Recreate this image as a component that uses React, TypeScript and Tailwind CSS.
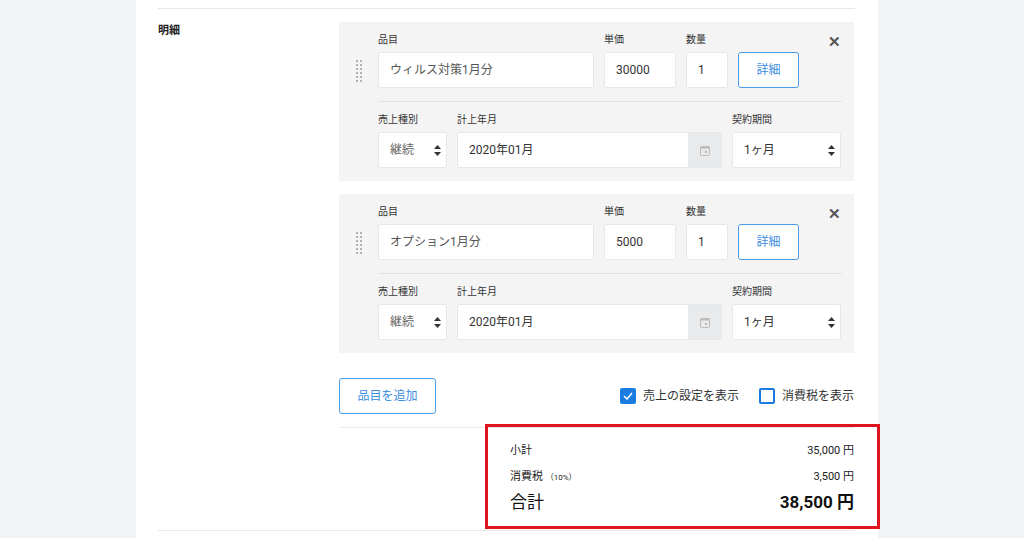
import React from "react";

const font = { fontFamily: '"Roboto","Noto Sans CJK JP",sans-serif' };

function Updown() {
  return (
    <svg width="7" height="11" viewBox="0 0 7 11" className="text-[#333]">
      <path d="M3.5 0L7 4H0z M3.5 11L0 7h7z" fill="currentColor" />
    </svg>
  );
}

function Item({ name, price }: { name: string; price: string }) {
  const input = "h-[36px] bg-white border border-[#e5e7eb] rounded-[2px] flex items-center px-[11px] text-[12px] text-[#333]";
  const label = "text-[10px] leading-[15px] text-[#333] mb-[5px]";
  return (
    <div className="relative bg-[#f4f4f4] pl-[39px] pr-[12px] pt-[10px] pb-[13px]">
      <div className="absolute left-[17px] top-[38px] grid grid-cols-2 gap-x-[2px] gap-y-[2px]">
        {Array.from({ length: 12 }).map((_, i) => (
          <div key={i} className="w-[2px] h-[2px] bg-[#b0b0b0]" />
        ))}
      </div>
      <div className="absolute right-[13px] top-[9px] text-[15px] font-bold text-[#555]">✕</div>
      <div className="flex gap-[10px] items-end">
        <div className="w-[216px]">
          <div className={label}>品目</div>
          <div className={input + " text-[#555]"}>{name}</div>
        </div>
        <div className="w-[72px]">
          <div className={label}>単価</div>
          <div className={input}>{price}</div>
        </div>
        <div className="w-[42px]">
          <div className={label}>数量</div>
          <div className={input}>1</div>
        </div>
        <div className="w-[61px] h-[36px] border border-[#4a9be8] rounded-[3px] bg-white flex items-center justify-center text-[12px] text-[#3b8de0]">詳細</div>
      </div>
      <div className="h-px bg-[#e2e2e2] mt-[13px] mb-[10px]" />
      <div className="flex gap-[10px]">
        <div className="w-[69px]">
          <div className={label}>売上種別</div>
          <div className={input + " justify-between pr-[5px] px-[8px] text-[#666]"}>継続<Updown /></div>
        </div>
        <div className="w-[265px]">
          <div className={label}>計上年月</div>
          <div className="h-[36px] flex border border-[#e5e7eb] rounded-[2px] bg-white">
            <div className="flex-1 flex items-center px-[11px] text-[12px] text-[#333]">2020年01月</div>
            <div className="w-[33px] bg-[#e9eaec] flex items-center justify-center">
              <svg width="10" height="11" viewBox="0 0 10 11"><rect x="0.5" y="1.5" width="9" height="9" rx="1" fill="none" stroke="#bbb" /><rect x="0.5" y="1.5" width="9" height="2" fill="#bbb" /><rect x="5" y="6" width="2" height="2" fill="#bbb" /></svg>
            </div>
          </div>
        </div>
        <div className="w-[109px]">
          <div className={label}>契約期間</div>
          <div className={input + " justify-between pr-[5px] px-[8px]"}>1ヶ月<Updown /></div>
        </div>
      </div>
    </div>
  );
}

export default function App() {
  return (
    <div className="w-[1024px] h-[538px] bg-[#f2f3f5] overflow-hidden" style={font}>
      <div className="ml-[136px] w-[742px] h-[538px] bg-white pl-[22px] pr-[23px] pt-[8px]">
        <div className="h-px bg-[#e8e8e8]" />
        <div className="flex mt-[13px]">
          <div className="w-[181px] pt-[1px] text-[11px] font-bold text-[#222]">明細</div>
          <div className="w-[515px]">
            <div className="flex flex-col gap-[13px]">
              <Item name="ウィルス対策1月分" price="30000" />
              <Item name="オプション1月分" price="5000" />
            </div>
            <div className="flex items-center justify-between mt-[25px]">
              <div className="w-[97px] h-[36px] border border-[#4a9be8] rounded-[3px] flex items-center justify-center text-[12px] text-[#3b8de0]">品目を追加</div>
              <div className="flex items-center text-[12px] text-[#333]">
                <div className="w-[16px] h-[16px] rounded-[2px] bg-[#1a7be0] flex items-center justify-center">
                  <svg width="10" height="8" viewBox="0 0 10 8"><path d="M1 4l3 3 5-6" stroke="white" strokeWidth="1.5" fill="none" /></svg>
                </div>
                <span className="ml-[7px]">売上の設定を表示</span>
                <div className="ml-[20px] w-[16px] h-[16px] rounded-[2px] border-2 border-[#1a7be0] bg-white" />
                <span className="ml-[7px]">消費税を表示</span>
              </div>
            </div>
            <div className="h-px bg-[#e8e8e8] mt-[13px]" />
            <div className="flex justify-end -mt-[4px] mr-[-26px]">
              <div className="w-[395px] h-[105px] border-[3px] border-[#e0141e] pl-[22px] pr-[23px] pt-[16px]">
                <div className="flex justify-between text-[11px] text-[#222]"><span>小計</span><span>35,000 円</span></div>
                <div className="flex justify-between text-[11px] text-[#222] mt-[9px]"><span>消費税 <span className="text-[8px]">（10%）</span></span><span>3,500 円</span></div>
                <div className="flex justify-between items-end text-[#111] mt-[5px]"><span className="text-[17px]">合計</span><span className="text-[17px] font-bold">38,500 円</span></div>
              </div>
            </div>
          </div>
        </div>
        <div className="h-px bg-[#e8e8e8] mt-[1px]" />
      </div>
    </div>
  );
}
